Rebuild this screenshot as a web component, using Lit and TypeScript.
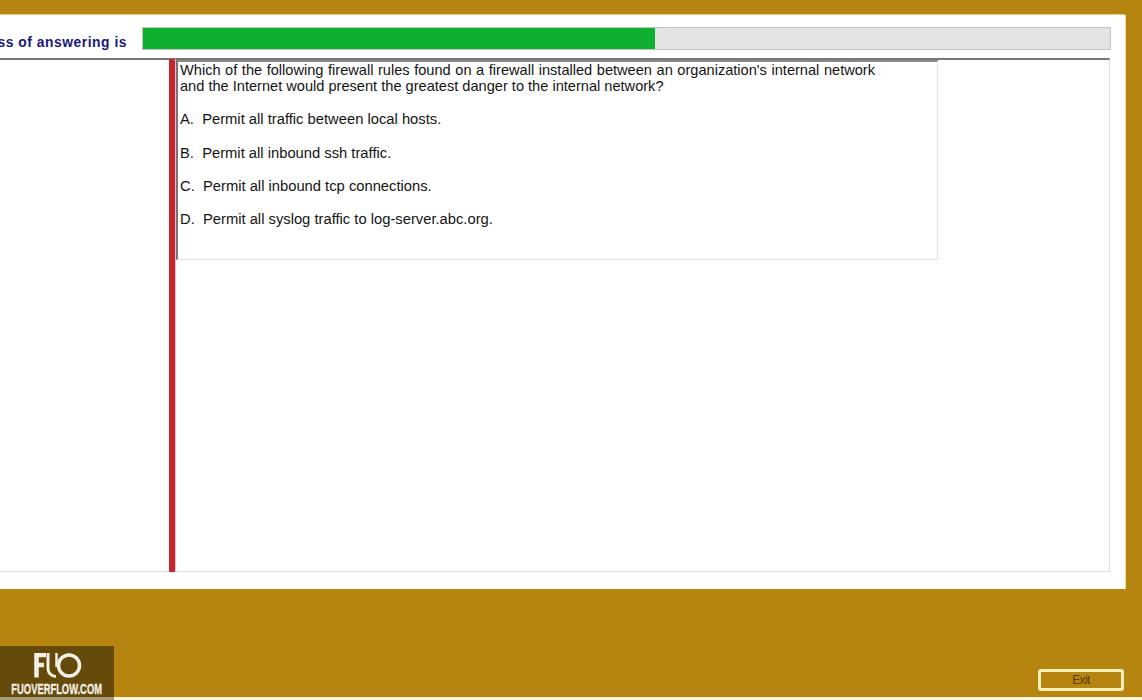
import { LitElement, html, css } from "lit";
import { customElement } from "lit/decorators.js";

@customElement("app-root")
export class AppRoot extends LitElement {
  static styles = css`
    :host {
      display: flex;
      flex-direction: column;
      width: 1142px;
      height: 700px;
      overflow: hidden;
      background: #b5850f;
      font-family: "Liberation Sans", Arial, sans-serif;
    }
    .panel {
      box-sizing: border-box;
      width: 1125px;
      height: 574px;
      margin-top: 15px;
      background: #fff;
      box-shadow: 0 -1px 0 #e9d089, 1px 0 0 #f0dca0;
      padding-top: 12px;
      padding-right: 14px;
      flex: none;
    }
    .top {
      display: flex;
      height: 23px;
    }
    .label {
      width: 142px;
      flex: none;
      display: flex;
      justify-content: flex-end;
      overflow: hidden;
      white-space: nowrap;
      padding-right: 15px;
      box-sizing: border-box;
      font-size: 13.8px;
      font-weight: bold;
      letter-spacing: 0.55px;
      line-height: 31px;
      color: #17177c;
    }
    .bar {
      flex: 1;
      background: #e4e4e4;
      border: 1px solid #c2c4c2;
      box-sizing: border-box;
      display: flex;
    }
    .fill {
      background: #0fb02f;
      height: 100%;
    }
    .pane {
      box-sizing: border-box;
      height: 514px;
      margin-top: 8px;
      margin-right: 1px;
      border-top: 2px solid #777;
      border-right: 1px solid #dcdcdc;
      border-bottom: 1px solid #dcdcdc;
      display: flex;
    }
    .left {
      width: 169px;
      flex: none;
    }
    .split {
      width: 6px;
      flex: none;
      background: #c4262a;
      margin-top: -1px;
      margin-bottom: -1px;
      border-radius: 1px;
      box-shadow: 1px 0 0 #fbd;
    }
    .question {
      box-sizing: border-box;
      margin-left: 1px;
      width: 762px;
      height: 200px;
      border-top: 2px solid #888;
      border-left: 2px solid #777;
      border-right: 1px solid #e2e2e2;
      border-bottom: 1px solid #e2e2e2;
      padding: 0 0 0 2px;
      font-size: 14.75px;
      line-height: 16px;
      color: #141414;
    }
    .stem {
      margin: 0;
      width: 695px;
      font-size: 14.6px;
      text-align: justify;
    }
    .opt {
      margin: 17.3px 0 0;
      white-space: pre;
    }
    .bottom {
      flex: 1;
      display: flex;
      align-items: flex-end;
      justify-content: space-between;
      padding-right: 18px;
    }
    .logo {
      width: 114px;
      height: 51px;
      background: #664a0a;
      display: flex;
      flex-direction: column;
      align-items: center;
      overflow: hidden;
      box-sizing: border-box;
      padding-top: 7px;
    }
    .logo svg {
      display: block;
    }
    .site {
      font-size: 14px;
      font-weight: bold;
      color: #f2efe6;
      white-space: nowrap;
      line-height: 13px;
      margin-top: 5px;
      transform: scaleX(0.67);
      -webkit-text-stroke: 0.3px #f2efe6;
    }
    .exit {
      box-sizing: border-box;
      width: 86px;
      height: 22px;
      margin-bottom: 6px;
      border: 3px solid #fdf0b8;
      border-radius: 3px;
      background: #b5850f;
      color: #5a3c06;
      font-family: inherit;
      font-size: 12px;
      letter-spacing: -0.6px;
      padding: 0 0 1px;
    }
    .strip {
      flex: none;
      height: 3px;
      background: linear-gradient(to right, #a59a7c 114px, #fbf6df 114px);
    }
  `;

  render() {
    return html`
      <div class="panel">
        <div class="top">
          <div class="label">Progress of answering is</div>
          <div class="bar"><div class="fill" style="width: 52.9%"></div></div>
        </div>
        <div class="pane">
          <div class="left"></div>
          <div class="split"></div>
          <div class="question">
            <p class="stem">Which of the following firewall rules found on a firewall installed between an organization's internal network and the Internet would present the greatest danger to the internal network?</p>
            <p class="opt">A.  Permit all traffic between local hosts.</p>
            <p class="opt">B.  Permit all inbound ssh traffic.</p>
            <p class="opt">C.  Permit all inbound tcp connections.</p>
            <p class="opt">D.  Permit all syslog traffic to log-server.abc.org.</p>
          </div>
        </div>
      </div>
      <div class="bottom">
        <div class="logo">
          <svg width="50" height="25" viewBox="0 0 50 25" fill="none" stroke="#f3f0e8">
            <path d="M4.5 24.5V2H14M4.5 12H12" stroke-width="4.5" />
            <path d="M16 0V15a8 8 0 0 0 8 8.5" stroke-width="3" />
            <path d="M24.5 0V14" stroke-width="2.5" />
            <circle cx="37" cy="12.5" r="10.5" stroke-width="3.5" />
          </svg>
          <div class="site">FUOVERFLOW.COM</div>
        </div>
        <button class="exit">Exit</button>
      </div>
      <div class="strip"></div>
    `;
  }
}
